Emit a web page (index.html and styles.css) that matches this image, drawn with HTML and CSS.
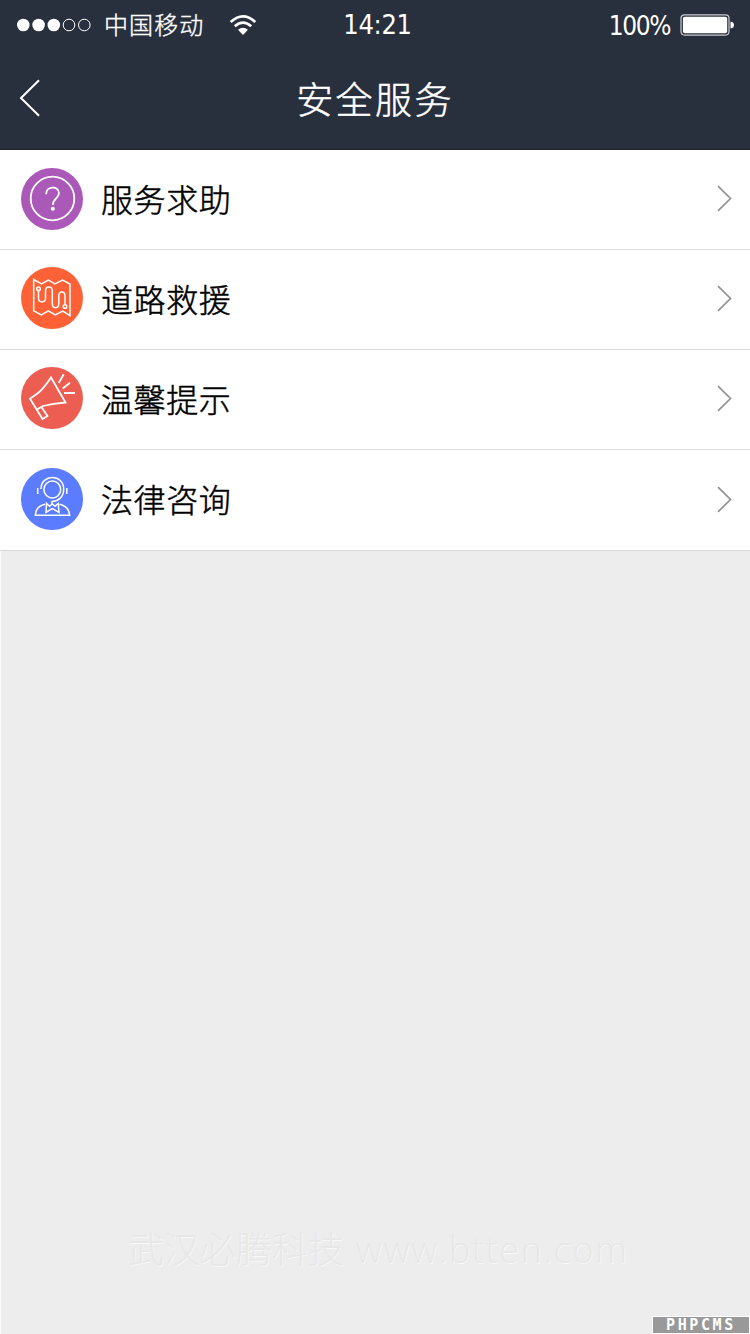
FILE: index.html
```html
<!DOCTYPE html>
<html lang="zh-CN">
<head>
<meta charset="utf-8">
<title>安全服务</title>
<link rel="stylesheet" href="styles.css">
</head>
<body>
<div class="screen">
  <header class="header">
    <div class="status">
      <div class="status-left">
        <svg class="signal" width="76" height="16" viewBox="0 0 76 16">
          <g fill="#fff"><circle cx="7.3" cy="8" r="6.3"/><circle cx="22.6" cy="8" r="6.3"/><circle cx="37.8" cy="8" r="6.3"/></g>
          <g fill="none" stroke="#fff" stroke-width="1"><circle cx="53" cy="8" r="5.8"/><circle cx="68.3" cy="8" r="5.8"/></g>
        </svg>
        <span class="carrier">中国移动</span>
        <svg class="wifi" width="28" height="22" viewBox="0 0 28 22">
          <g fill="none" stroke="#fff" stroke-width="2.7"><path d="M1.7 8Q14 -3.2 26.3 8"/><path d="M5.8 12.3Q14 5 22.2 12.3"/></g>
          <path fill="#fff" d="M9 15.8Q14 11.5 19 15.8L14 21Z"/>
        </svg>
      </div>
      <span class="time">14:21</span>
      <div class="status-right">
        <span class="percent">100%</span>
        <svg class="battery" width="54" height="22" viewBox="0 0 54 22">
          <rect x="1" y=".9" width="48" height="20.2" rx="3.5" fill="none" stroke="#c9ccd1" stroke-width="1.2"/>
          <rect x="2.9" y="2.8" width="44.3" height="16.5" rx="2" fill="#fff"/>
          <path d="M50.5 7.5Q54 8 54 11T50.5 14.5Z" fill="#fff"/>
        </svg>
      </div>
    </div>
    <div class="navbar">
      <svg class="back" width="22" height="38" viewBox="0 0 22 38"><path d="M20 1.2L2 19L20 36.8" fill="none" stroke="#fff" stroke-width="2"/></svg>
      <h1 class="title">安全服务</h1>
    </div>
  </header>
  <ul class="list">
    <li class="row">
      <svg class="icon" viewBox="0 0 62 62">
        <circle cx="31" cy="31" r="31" fill="#ab59b9"/>
        <g class="line"><circle cx="31.5" cy="30.5" r="21.8"/><path d="M25.2 26.2C25 17.3 38.2 17.6 38 25.3C37.8 30.4 31.8 30.5 31.8 37"/></g>
        <circle cx="31.8" cy="40.7" r="2" fill="#fff"/>
      </svg>
      <span class="label">服务求助</span>
      <svg class="arrow" viewBox="0 0 15 27"><path d="M1 1.2L13.5 13.5L1 25.8"/></svg>
    </li>
    <li class="row raised">
      <svg class="icon" viewBox="0 0 62 62">
        <circle cx="31" cy="31" r="31" fill="#ff6136"/>
        <g class="line thin"><path d="M12.7 12.5L20.5 16.8L27.3 13L34 16.8L41.5 13L49 17V48.7L41.8 44.2L34.2 48L27.3 43.8L20.3 48L12.7 43.8Z"/><circle cx="17.5" cy="21.7" r="1.8"/><circle cx="44" cy="39.5" r="1.8"/>
        <path d="M17.5 23.7V31C17.5 36.2 24.5 36.2 24.5 31V24C24.5 18.5 31.3 18.5 31.3 24V36.5C31.3 42 37.8 42 37.8 36.5V29C37.8 23.5 44 23.5 44 29V37.5"/></g>
      </svg>
      <span class="label">道路救援</span>
      <svg class="arrow" viewBox="0 0 15 27"><path d="M1 1.2L13.5 13.5L1 25.8"/></svg>
    </li>
    <li class="row raised">
      <svg class="icon" viewBox="0 0 62 62">
        <circle cx="31" cy="31" r="31" fill="#ec5e52"/>
        <g class="line"><path d="M30 10.5L44.5 35.5Q32 36.5 22 39L15.7 42.5L9 31.8L15 27.5Q21 24 30 10.5Z"/><path d="M15.7 42.5L21.5 52L26.5 49L20.8 40.5"/><path d="M37.7 16L42.7 7.2M41.7 21.5L49 15.8M43 26H54"/></g>
      </svg>
      <span class="label">温馨提示</span>
      <svg class="arrow" viewBox="0 0 15 27"><path d="M1 1.2L13.5 13.5L1 25.8"/></svg>
    </li>
    <li class="row last">
      <svg class="icon" viewBox="0 0 62 62">
        <circle cx="31" cy="31" r="31" fill="#5b7cff"/>
        <g class="line thin"><circle cx="31.3" cy="21.5" r="8.4"/><path d="M20 21C20 5.5 42.7 6 42.7 21C42.7 29 37.5 33.2 31 33.5V36"/><path d="M16.7 20V26M45.8 20V26"/>
        <path d="M24 36.2Q14.5 38.5 14.3 47.3H48.7Q48.2 38.5 38.5 36.2"/><path d="M25.5 35.5L25 44.3L31.3 40.5L38 44.3L37.2 35.5L34 38.3L31.3 36L28.5 38.3Z"/></g>
      </svg>
      <span class="label">法律咨询</span>
      <svg class="arrow" viewBox="0 0 15 27"><path d="M1 1.2L13.5 13.5L1 25.8"/></svg>
    </li>
  </ul>
  <main class="empty">
    <p class="watermark"><span>武汉必腾科技</span><span class="site">www.btten.com</span></p>
    <div class="badge">PHPCMS</div>
  </main>
</div>
</body>
</html>
```
FILE: styles.css
```css
* { box-sizing: border-box; }
body { margin: 0; font-family: "Liberation Sans", "Noto Sans CJK SC", sans-serif; }
.screen { width: 750px; height: 1334px; display: flex; flex-direction: column; overflow: hidden; background: #fff; }
.header { height: 150px; background: #282f3d; border-bottom: 1px solid #21232f; color: #fff; }
.status { height: 50px; display: grid; grid-template-columns: 1fr auto 1fr; align-items: center; padding: 0 16px 0 16px; font-family: "DejaVu Sans Condensed", "DejaVu Sans", "Noto Sans CJK SC", sans-serif; font-stretch: condensed; }
.status-left, .status-right { display: flex; align-items: center; }
.status-right { justify-content: flex-end; }
.carrier { font: 300 24px/36px "Noto Sans CJK SC", sans-serif; letter-spacing: 1.1px; margin: -2px 0 0 12px; -webkit-text-stroke: .4px #fff; }
.wifi { margin-left: 25px; margin-top: -1px; }
.time { font-size: 27px; line-height: 48px; letter-spacing: -.3px; margin-left: 5px; }
.percent { font-size: 26px; line-height: 46px; letter-spacing: -1.4px; margin: 2px 10px 0 0; }
.navbar { height: 99px; display: grid; grid-template-columns: 60px 1fr 60px; align-items: center; }
.back { margin-left: 19px; margin-top: -3px; }
.title { margin: -3px 0 0; text-align: center; font: 300 37px/60px "Noto Sans CJK SC", sans-serif; letter-spacing: 2.4px; -webkit-text-stroke: .5px #fff; }
.list { list-style: none; margin: 0; padding: 0; }
.row { height: 100px; display: flex; align-items: center; padding: 0 18px 2px 21px; border-bottom: 1px solid #d9d9d9; }
.last { height: 101px; }
.icon { width: 62px; height: 62px; }
.raised .icon { margin-top: -2px; }
.label { font: 300 32px/48px "Noto Sans CJK SC", sans-serif; letter-spacing: .6px; margin: -2px 0 0 18px; color: #000; flex: 1; -webkit-text-stroke: .5px #000; }
.arrow { width: 15px; height: 27px; }
.arrow path { fill: none; stroke: #929292; stroke-width: 1.7; }
.line { fill: none; stroke: #fff; stroke-width: 1.8; }
.thin { stroke-width: 1.5; }
.empty { flex: 1; display: flex; flex-direction: column; justify-content: flex-end; background: #ededed; border-left: 1px solid #fafafa; }
.watermark { display: flex; align-items: center; gap: 12px; margin: 0 0 39px 127px; font: 300 36px/54px "Noto Sans CJK SC", sans-serif; color: #e7e7e7; text-shadow: .8px .8px 0 #f8f8f8; white-space: nowrap; }
.site { font-family: "Open Sans", "Noto Sans", sans-serif; letter-spacing: 1.6px; margin-top: 6px; }
.badge { align-self: flex-end; width: 98px; height: 18px; background: #999; border: 1px solid #fff; color: #fff; font: bold 15px/17px "DejaVu Sans Mono", monospace; letter-spacing: 2.6px; padding-left: 13px; }
```
